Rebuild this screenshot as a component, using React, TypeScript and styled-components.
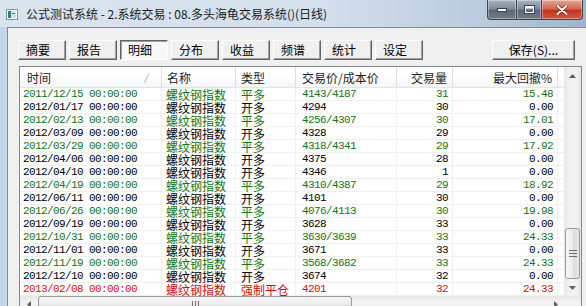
import React from 'react'
import styled, { createGlobalStyle, css } from 'styled-components'

const CJK = `"Noto Sans CJK SC", "Liberation Sans", sans-serif`
const MONO = `"Liberation Mono", "Noto Sans CJK SC", monospace`

const GlobalStyle = createGlobalStyle`
  html, body { margin: 0; padding: 0; }
  body { width: 586px; height: 306px; overflow: hidden; background: #bcd2ea; }
`

type Tone = 'green' | 'black' | 'red'
type Trade = { date: string; kind: string; price: string; qty: string; dd: string; tone: Tone }

const trades: Trade[] = [
  { date: '2011/12/15', kind: '平多', price: '4143/4187', qty: '31', dd: '15.48', tone: 'green' },
  { date: '2012/01/17', kind: '开多', price: '4294', qty: '30', dd: '0.00', tone: 'black' },
  { date: '2012/02/13', kind: '平多', price: '4256/4307', qty: '30', dd: '17.01', tone: 'green' },
  { date: '2012/03/09', kind: '开多', price: '4328', qty: '29', dd: '0.00', tone: 'black' },
  { date: '2012/03/29', kind: '平多', price: '4318/4341', qty: '29', dd: '17.92', tone: 'green' },
  { date: '2012/04/06', kind: '开多', price: '4375', qty: '28', dd: '0.00', tone: 'black' },
  { date: '2012/04/10', kind: '开多', price: '4346', qty: '1', dd: '0.00', tone: 'black' },
  { date: '2012/04/19', kind: '平多', price: '4310/4387', qty: '29', dd: '18.92', tone: 'green' },
  { date: '2012/06/11', kind: '开多', price: '4101', qty: '30', dd: '0.00', tone: 'black' },
  { date: '2012/06/26', kind: '平多', price: '4076/4113', qty: '30', dd: '19.98', tone: 'green' },
  { date: '2012/09/19', kind: '开多', price: '3628', qty: '33', dd: '0.00', tone: 'black' },
  { date: '2012/10/31', kind: '平多', price: '3630/3639', qty: '33', dd: '24.33', tone: 'green' },
  { date: '2012/11/01', kind: '开多', price: '3671', qty: '33', dd: '0.00', tone: 'black' },
  { date: '2012/11/19', kind: '平多', price: '3568/3682', qty: '33', dd: '24.33', tone: 'green' },
  { date: '2012/12/10', kind: '开多', price: '3674', qty: '32', dd: '0.00', tone: 'black' },
  { date: '2013/02/08', kind: '强制平仓', price: '4201', qty: '32', dd: '24.33', tone: 'red' }
]

const toneColour: Record<Tone, string> = { green: '#117511', black: '#000000', red: '#d80c0c' }

const tabs = ['摘要', '报告', '明细', '分布', '收益', '频谱', '统计', '设定']
const COLS = '142px 74px 60px 101px 56px 105px 1fr'

const Window = styled.div`
  width: 586px;
  height: 306px;
  overflow: hidden;
  display: flex;
  flex-direction: column;
  background: linear-gradient(90deg, #c4d6ea 0%, #bdd1e8 60%, #a9c0da 100%);
`

const TitleBar = styled.div`
  height: 27px;
  flex: none;
  display: flex;
  align-items: flex-start;
  background: linear-gradient(90deg, #dae4ef 0%, #d3dfec 55%, #b8c9dc 85%, #9fb4cc 100%);
`

const AppIcon = styled.svg`
  margin: 9px 0 0 6px;
  flex: none;
`

const Title = styled.div`
  margin: 5px 0 0 8px;
  font: 12px/18px ${CJK};
  color: #1c1c1c;
  white-space: nowrap;
`

const Caption = styled.div`
  margin-left: auto;
  margin-right: 3px;
  display: flex;
  height: 20px;
`

const CapButton = styled.div<{ $w: number; $close?: boolean }>`
  width: ${({ $w }) => $w}px;
  height: 20px;
  box-sizing: border-box;
  display: flex;
  align-items: center;
  justify-content: center;
  border: 1px solid #3d4654;
  border-top: none;
  margin-left: -1px;
  box-shadow: inset 0 0 0 1px rgba(255, 255, 255, 0.35);
  background: ${({ $close }) =>
    $close
      ? 'linear-gradient(180deg, #e6a596 0%, #d46a55 45%, #c3341c 55%, #d4583a 100%)'
      : 'linear-gradient(180deg, #a9b4c2 0%, #7f8b9b 45%, #5d6878 55%, #6f7b8b 100%)'};
  &:first-child { border-bottom-left-radius: 4px; }
  &:last-child { border-bottom-right-radius: 4px; }
`

const Client = styled.div`
  flex: 1;
  min-height: 0;
  margin-left: 7px;
  background: #f0f0f0;
  border-top: 1px solid #7d8a99;
  border-left: 1px solid #7d8a99;
  padding: 12px 4px 0 10px;
  display: flex;
  flex-direction: column;
`

const Toolbar = styled.div`
  display: flex;
  gap: 3px;
  height: 20px;
  flex: none;
`

const TabButton = styled.div<{ $pressed?: boolean; $wide?: boolean }>`
  width: ${({ $wide }) => ($wide ? 83 : 48)}px;
  height: 20px;
  box-sizing: border-box;
  font: 12px/18px ${CJK};
  color: #000;
  padding-left: ${({ $wide }) => ($wide ? 0 : 7)}px;
  text-align: ${({ $wide }) => ($wide ? 'center' : 'left')};
  background: #f0f0f0;
  border: 1px solid;
  border-color: #ffffff #646464 #646464 #ffffff;
  box-shadow: inset -1px -1px 0 #a0a0a0;
  ${({ $pressed }) =>
    $pressed &&
    css`
      background: #f8f8f8;
      border-color: #646464 #ffffff #ffffff #646464;
      box-shadow: inset 1px 1px 0 #a0a0a0;
    `}
  ${({ $wide }) => $wide && 'margin-left: auto; margin-right: 7px;'}
`

const ListView = styled.div`
  margin: 6px 0 0 1px;
  border: 1px solid #828790;
  border-bottom: none;
  background: #fff;
  display: flex;
  flex-direction: column;
  flex: none;
`

const Upper = styled.div`
  display: flex;
  height: 229px;
`

const Table = styled.div`
  flex: 1;
  overflow: hidden;
`

const HeaderRow = styled.div`
  display: grid;
  grid-template-columns: ${COLS};
  height: 21px;
  box-sizing: border-box;
  border-bottom: 1px solid #e3e5e8;
  background: linear-gradient(180deg, #ffffff 0%, #ffffff 45%, #f4f5f7 100%);
`

const HeadCell = styled.div<{ $right?: boolean; $pad?: number }>`
  display: flex;
  align-items: center;
  justify-content: ${({ $right }) => ($right ? 'flex-end' : 'flex-start')};
  padding: 2px 5px 0 ${({ $pad }) => $pad ?? 5}px;
  font: 12px/18px ${CJK};
  color: #1e1e1e;
  border-right: 1px solid #dcdee2;
  white-space: nowrap;
  overflow: hidden;
  &:last-child { border-right: none; }
`

const SortMark = styled.svg`
  margin-left: auto;
  margin-right: 6px;
`

const Row = styled.div<{ $tone: Tone }>`
  display: grid;
  grid-template-columns: ${COLS};
  height: 13px;
  color: ${({ $tone }) => toneColour[$tone]};
  background: linear-gradient(0deg, #f0f0f0 0, #f0f0f0 1px, transparent 1px);
`

const Cell = styled.div<{ $mono?: boolean; $right?: boolean; $pad?: number }>`
  padding: 0 5px 0 ${({ $pad }) => $pad ?? 5}px;
  text-align: ${({ $right }) => ($right ? 'right' : 'left')};
  white-space: nowrap;
  overflow: hidden;
  height: 13px;
  line-height: 13px;
  background: linear-gradient(270deg, #f0f0f0 0, #f0f0f0 1px, transparent 1px);
  ${({ $mono }) =>
    $mono
      ? css`
          font-family: ${MONO};
          font-size: 11px;
          letter-spacing: -0.6px;
        `
      : css`
          font-family: ${CJK};
          font-size: 12px;
        `}
  &:last-child { background: none; }
`

const VScroll = styled.div`
  width: 17px;
  flex: none;
  display: flex;
  flex-direction: column;
  background: linear-gradient(90deg, #e6e6e6 0%, #f2f2f2 30%, #f2f2f2 70%, #e6e6e6 100%);
`

const HScroll = styled.div`
  height: 17px;
  display: flex;
  background: linear-gradient(180deg, #e6e6e6 0%, #f2f2f2 30%, #f2f2f2 70%, #e6e6e6 100%);
`

const ArrowBox = styled.div`
  width: 17px;
  height: 17px;
  flex: none;
  display: flex;
  align-items: center;
  justify-content: center;
`

const Track = styled.div<{ $horizontal?: boolean }>`
  flex: 1;
  display: flex;
  flex-direction: ${({ $horizontal }) => ($horizontal ? 'row' : 'column')};
`

const Thumb = styled.div<{ $horizontal?: boolean; $offset: number; $size: number }>`
  box-sizing: border-box;
  border: 1px solid #9a9a9a;
  border-radius: 3px;
  display: flex;
  align-items: center;
  justify-content: center;
  ${({ $horizontal, $offset, $size }) =>
    $horizontal
      ? css`
          margin-left: ${$offset}px;
          width: ${$size}px;
          height: 17px;
          background: linear-gradient(180deg, #f6f6f6 0%, #ececec 50%, #dcdcdc 51%, #e4e4e4 100%);
        `
      : css`
          margin: ${$offset}px 1px 0 1px;
          height: ${$size}px;
          background: linear-gradient(90deg, #f6f6f6 0%, #ececec 50%, #dcdcdc 51%, #e4e4e4 100%);
        `}
`

const Triangle = ({ dir }: { dir: 'up' | 'down' | 'left' | 'right' }) => {
  const pts = {
    up: '0,4 3.5,0 7,4',
    down: '0,0 7,0 3.5,4',
    left: '4,0 4,7 0,3.5',
    right: '0,0 0,7 4,3.5'
  }[dir]
  const vertical = dir === 'up' || dir === 'down'
  return (
    <svg width={vertical ? 7 : 4} height={vertical ? 4 : 7}>
      <polygon points={pts} fill="#606060" />
    </svg>
  )
}

const Grip = ({ horizontal }: { horizontal?: boolean }) =>
  horizontal ? (
    <svg width="7" height="8">
      <path d="M0.5 0v8M3.5 0v8M6.5 0v8" stroke="#6e6e6e" strokeWidth="1" />
    </svg>
  ) : (
    <svg width="8" height="7">
      <path d="M0 0.5h8M0 3.5h8M0 6.5h8" stroke="#6e6e6e" strokeWidth="1" />
    </svg>
  )

export default function App() {
  return (
    <>
      <GlobalStyle />
      <Window>
        <TitleBar>
          <AppIcon width="12" height="11" viewBox="0 0 12 11">
            <rect x="0.5" y="0.5" width="11" height="10" fill="#fff" stroke="#8a9099" />
            <rect x="2" y="2" width="3" height="7" fill="#1f8a78" />
            <rect x="5" y="2" width="5" height="7" fill="#cfe3ef" />
            <rect x="6" y="4" width="3" height="1" fill="#3a78b8" />
          </AppIcon>
          <Title>公式测试系统 - 2.系统交易 : 08.多头海龟交易系统()(日线)</Title>
          <Caption>
            <CapButton $w={30}>
              <svg width="10" height="4">
                <rect x="0.5" y="0.5" width="9" height="3" fill="#fff" stroke="#3a4450" />
              </svg>
            </CapButton>
            <CapButton $w={26}>
              <svg width="11" height="9">
                <rect x="0.5" y="0.5" width="10" height="8" fill="none" stroke="#3a4450" />
                <rect x="1.5" y="1.5" width="8" height="6" fill="none" stroke="#fff" />
                <rect x="2" y="2" width="7" height="1.5" fill="#fff" />
              </svg>
            </CapButton>
            <CapButton $w={42} $close>
              <svg width="12" height="10">
                <path d="M1.5 1l9 8M10.5 1l-9 8" stroke="#5a1a10" strokeWidth="3.2" strokeLinecap="round" />
                <path d="M1.5 1l9 8M10.5 1l-9 8" stroke="#fff" strokeWidth="2" strokeLinecap="round" />
              </svg>
            </CapButton>
          </Caption>
        </TitleBar>
        <Client>
          <Toolbar>
            {tabs.map((t) => (
              <TabButton key={t} $pressed={t === '明细'}>
                {t}
              </TabButton>
            ))}
            <TabButton $wide>保存(S)...</TabButton>
          </Toolbar>
          <ListView>
            <Upper>
              <Table>
                <HeaderRow>
                  <HeadCell $pad={7}>
                    时间
                    <SortMark width="6" height="10">
                      <path d="M0.5 9.5L5 0.5" stroke="#b8b8b8" strokeWidth="1" />
                    </SortMark>
                  </HeadCell>
                  <HeadCell>名称</HeadCell>
                  <HeadCell>类型</HeadCell>
                  <HeadCell $pad={6}>交易价/成本价</HeadCell>
                  <HeadCell $right>交易量</HeadCell>
                  <HeadCell $right>最大回撤%</HeadCell>
                  <HeadCell />
                </HeaderRow>
                {trades.map((t) => (
                  <Row key={t.date} $tone={t.tone}>
                    <Cell $mono $pad={3}>{`${t.date} 00:00:00`}</Cell>
                    <Cell $pad={4}>螺纹钢指数</Cell>
                    <Cell>{t.kind}</Cell>
                    <Cell $mono $pad={6}>{t.price}</Cell>
                    <Cell $mono $right>{t.qty}</Cell>
                    <Cell $mono $right>{t.dd}</Cell>
                    <Cell />
                  </Row>
                ))}
              </Table>
              <VScroll>
                <ArrowBox>
                  <Triangle dir="up" />
                </ArrowBox>
                <Track>
                  <Thumb $offset={144} $size={51}>
                    <Grip />
                  </Thumb>
                </Track>
                <ArrowBox>
                  <Triangle dir="down" />
                </ArrowBox>
              </VScroll>
            </Upper>
            <HScroll>
              <ArrowBox>
                <Triangle dir="left" />
              </ArrowBox>
              <Track $horizontal>
                <Thumb $horizontal $offset={1} $size={314}>
                  <Grip horizontal />
                </Thumb>
              </Track>
              <ArrowBox>
                <Triangle dir="right" />
              </ArrowBox>
              <ArrowBox />
            </HScroll>
          </ListView>
        </Client>
      </Window>
    </>
  )
}
